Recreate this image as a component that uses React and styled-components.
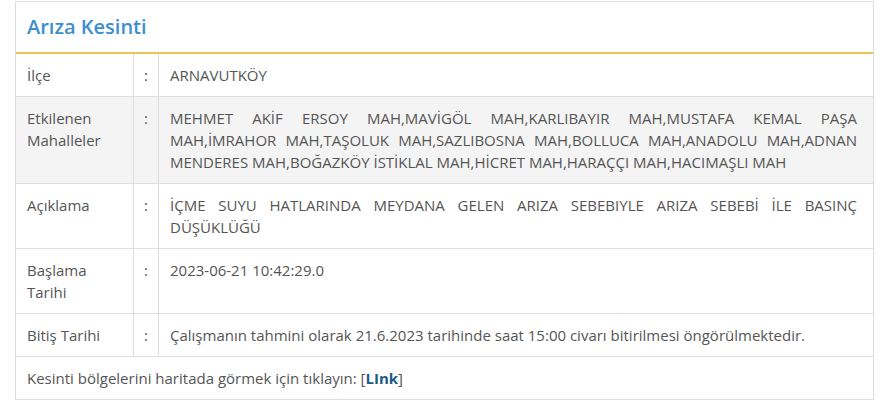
import React from "react";
import styled, { createGlobalStyle } from "styled-components";

// Arıza kesinti paneli => başlık + bilgi tablosu

const rows = [
  { label: "İlçe", value: "ARNAVUTKÖY" },
  {
    label: "Etkilenen Mahalleler",
    value:
      "MEHMET AKİF ERSOY MAH,MAVİGÖL MAH,KARLIBAYIR MAH,MUSTAFA KEMAL PAŞA MAH,İMRAHOR MAH,TAŞOLUK MAH,SAZLIBOSNA MAH,BOLLUCA MAH,ANADOLU MAH,ADNAN MENDERES MAH,BOĞAZKÖY İSTİKLAL MAH,HİCRET MAH,HARAÇÇI MAH,HACIMAŞLI MAH",
    shaded: true,
  },
  {
    label: "Açıklama",
    value:
      "İÇME SUYU HATLARINDA MEYDANA GELEN ARIZA SEBEBIYLE ARIZA SEBEBİ İLE BASINÇ DÜŞÜKLÜĞÜ",
  },
  { label: "Başlama Tarihi", value: "2023-06-21 10:42:29.0" },
  {
    label: "Bitiş Tarihi",
    value:
      "Çalışmanın tahmini olarak 21.6.2023 tarihinde saat 15:00 civarı bitirilmesi öngörülmektedir.",
  },
];

function App() {
  return (
    <>
      <GlobalStyle />
      <Panel>
        <Header>
          <Title>Arıza Kesinti</Title>
        </Header>
        {rows.map((row) => (
          <Row key={row.label} shaded={row.shaded}>
            <Label>{row.label}</Label>
            <Colon>:</Colon>
            <Value>{row.value}</Value>
          </Row>
        ))}
        <Footer>
          Kesinti bölgelerini haritada görmek için tıklayın: [
          <MapLink href="#">LInk</MapLink>]
        </Footer>
      </Panel>
    </>
  );
}

export default App;

const GlobalStyle = createGlobalStyle`
  body {
    margin: 0;
    background: #ffffff;
    font-family: "Open Sans", "Noto Sans", sans-serif;
  }
`;

const Panel = styled.div`
  width: 857px;
  margin: 1px 0 0 15px;
  border: 1px solid #dedede;
  background: #ffffff;
  color: #555555;
  font-size: 15px;
  line-height: 22px;
`;

const Header = styled.div`
  display: flex;
  align-items: center;
  padding: 0 11px;
  border-bottom: 2px solid #e5c64f;
  box-sizing: border-box;
  height: 52px;
`;

const Title = styled.h2`
  margin: 0;
  font-size: 20px;
  font-weight: 600;
  color: #3b8fcf;
`;

const Row = styled.div`
  display: grid;
  grid-template-columns: 118px 25px 1fr;
  border-bottom: 1px solid #dedede;
  background: ${(p) => (p.shaded ? "#f4f4f4" : "#ffffff")};
`;

const Cell = styled.div`
  padding: 10px 11px;
  border-right: 1px solid #dedede;
`;

const Label = styled(Cell)``;

const Colon = styled(Cell)`
  padding: 10px 0;
  text-align: center;
`;

const Value = styled(Cell)`
  padding-right: 16px;
  border-right: none;
  text-align: justify;
`;

const Footer = styled.div`
  padding: 10px 11px;
`;

const MapLink = styled.a`
  color: #1d5a85;
  font-weight: 700;
  text-decoration: none;
`;
